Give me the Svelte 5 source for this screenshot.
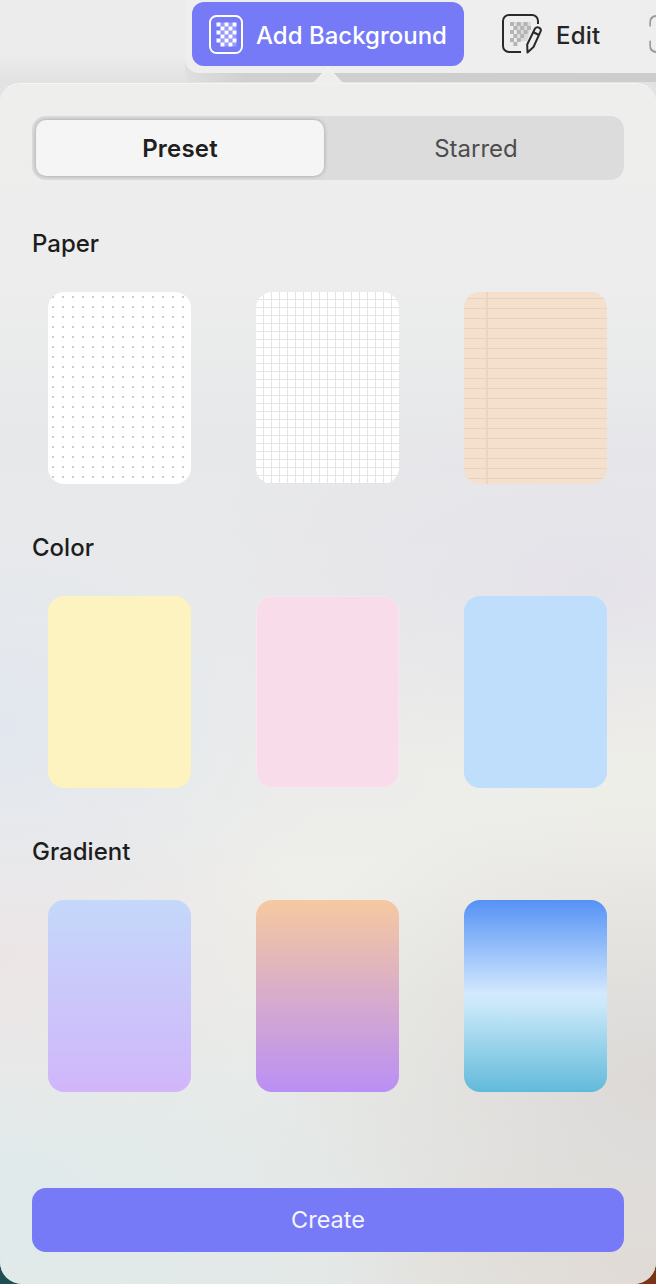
<script>
  const checker = [];
  for (let r = 0; r < 6; r++) for (let c = 0; c < 5; c++) if ((r + c) % 2 === 0) checker.push({ x: c * 4, y: r * 4 });
  const editCells = [];
  const widths = [6, 6, 5, 4, 3, 2];
  for (let r = 0; r < 6; r++) for (let c = 0; c < widths[r]; c++) if ((r + c) % 2 === 0) editCells.push({ x: c * 3.4, y: r * 4 });
  const sections = [
    { title: 'Paper', tiles: ['dots', 'grid', 'lined'] },
    { title: 'Color', tiles: ['yellow', 'pink', 'blue'] },
    { title: 'Gradient', tiles: ['g1', 'g2', 'g3'] }
  ];
</script>

<div class="page">
  <header class="top">
    <div class="bar-shade">
      <div class="bar">
        <button class="add">
          <svg width="34" height="39" viewBox="0 0 34 39">
            <rect x="1" y="1" width="32" height="37" rx="6.5" fill="none" stroke="#fff" stroke-width="2" />
            {#each checker as c}
              <rect x={7.5 + c.x} y={7.5 + c.y} width="4" height="4" fill="#fff" />
            {/each}
            {#each checker as c}
              {#if c.x < 16}<rect x={11.5 + c.x} y={7.5 + c.y} width="4" height="4" fill="#fff" opacity="0.25" />{/if}
            {/each}
          </svg>
          <span>Add Background</span>
        </button>
        <div class="edit">
          <svg width="42" height="40" viewBox="0 0 42 40">
            <path d="M19 38H7a6 6 0 0 1-6-6V7a6 6 0 0 1 6-6h23a6 6 0 0 1 6 6v3" fill="none" stroke="#2a2a2a" stroke-width="2" />
            <g transform="translate(8 8)">
              {#each editCells as c}
                <rect x={c.x} y={c.y} width="4" height="4" fill="#b4b4b4" />
              {/each}
              <path d="M4 0h17v5l-4 14h-7z" fill="#b4b4b4" opacity="0.35" />
            </g>
            <path d="M33 14.500c2-2.600 6.500-.7 5.800 2.400L31.500 33 25.500 38.500l-.3-8z" fill="#eee" stroke="#2a2a2a" stroke-width="2" stroke-linejoin="round" />
            <path d="M31 18l6 3" stroke="#2a2a2a" stroke-width="2" fill="none" />
          </svg>
          <span>Edit</span>
        </div>
        <span class="clipped"></span>
      </div>
    </div>
    <svg class="arrow" width="36" height="17" viewBox="0 0 36 17">
      <path d="M0 16.500c3 0 4.500-1 6.500-3.500L16 2.500c1.200-1.400 2.800-1.400 4 0L29.500 13c2 2.500 3.500 3.500 6.500 3.500z" fill="#eeeeed" />
      <path d="M0 16.500c3 0 4.500-1 6.500-3.500L16 2.500c1.200-1.400 2.800-1.400 4 0L29.500 13c2 2.500 3.500 3.500 6.500 3.500" fill="none" stroke="#f8f8f8" stroke-width="1" />
    </svg>
  </header>

  <main class="panel">
    <div class="segment">
      <div class="seg on">Preset</div>
      <div class="seg">Starred</div>
    </div>

    {#each sections as s}
      <section>
        <h2>{s.title}</h2>
        <div class="tiles">
          {#each s.tiles as t}
            <div class="tile {t}"></div>
          {/each}
        </div>
      </section>
    {/each}

    <button class="create">Create</button>
  </main>
</div>

<style>
  :global(body) {
    margin: 0;
    background: #ebebeb;
  }
  .page {
    width: 656px;
    height: 1284px;
    overflow: hidden;
    display: flex;
    flex-direction: column;
    font-family: Inter, "Liberation Sans", sans-serif;
    background:
      linear-gradient(to right, #1f4f55 0 40px, transparent 40px) 0 100% / 100% 30px no-repeat,
      linear-gradient(to left, #7a3516 0 40px, transparent 40px) 0 100% / 100% 30px no-repeat,
      linear-gradient(to bottom, #ececec 0, #ececec 56px, #e2e2e2 82px, #e6e6e6 110px);
  }
  .top {
    position: relative;
    height: 83px;
    flex: none;
  }
  .bar-shade {
    margin-left: 185px;
    height: 82px;
    background: linear-gradient(to right, #e0e0e0, #d0d0d0 60px, #cdcdcd);
    border-bottom-left-radius: 8px;
  }
  .bar {
    height: 73px;
    box-sizing: border-box;
    padding: 2px 0 0 7px;
    background: #eeeeee;
    border-bottom-left-radius: 14px;
    display: flex;
    align-items: flex-start;
    overflow: hidden;
  }
  .add {
    width: 272px;
    height: 64px;
    flex: none;
    border: 0;
    border-radius: 12px;
    background: #767af7;
    color: #fff;
    font: 500 24px Inter, "Liberation Sans", sans-serif;
    display: flex;
    align-items: center;
    gap: 13px;
    padding: 0 0 0 17px;
  }
  .add svg {
    flex: none;
  }
  .add span,
  .edit span {
    padding-top: 2px;
  }
  .edit {
    margin-left: 38px;
    height: 64px;
    display: flex;
    align-items: center;
    gap: 12px;
    font-size: 24px;
    font-weight: 500;
    letter-spacing: 0.2px;
    color: #262626;
    flex: none;
  }
  .clipped {
    flex: none;
    margin: 13px 0 0 49px;
    width: 24px;
    height: 38px;
    box-sizing: border-box;
    border: 2px solid #9a9a9a;
    border-right: 0;
    border-radius: 7px 0 0 7px;
    clip-path: polygon(0 0, 100% 0, 100% 30%, 0 30%, 0 68%, 100% 68%, 100% 100%, 0 100%);
  }
  .arrow {
    position: absolute;
    left: 310px;
    top: 67px;
  }
  .panel {
    flex: 1;
    box-sizing: border-box;
    padding: 32px 32px 32px;
    border-radius: 20px 20px 22px 22px;
    border-top: 1px solid #f7f7f7;
    display: flex;
    flex-direction: column;
    background:
      radial-gradient(ellipse 420px 200px at 90% 500px, #e5e3ea 0, rgba(229, 227, 234, 0) 100%),
      radial-gradient(ellipse 340px 240px at 0% 640px, #e2e7ef 0, rgba(226, 231, 239, 0) 100%),
      radial-gradient(ellipse 300px 180px at 100% 630px, #f0efe8 0, rgba(240, 239, 232, 0) 100%),
      radial-gradient(ellipse 320px 190px at 0% 870px, #ece5e6 0, rgba(236, 229, 230, 0) 100%),
      radial-gradient(ellipse 430px 260px at 0% 1120px, #e0eaeb 0, rgba(224, 234, 235, 0) 100%),
      radial-gradient(ellipse 420px 300px at 100% 1000px, #dcd9d7 0, rgba(220, 217, 215, 0) 100%),
      radial-gradient(ellipse 340px 150px at 100% 1190px, #e3dbd5 0, rgba(227, 219, 213, 0) 100%),
      linear-gradient(to bottom, #eeeeed 0, #ecedec 200px, #e7e8ea 360px, #ecedea 700px, #eeeeea 800px, #e4e8e6 1201px);
  }
  .segment {
    height: 64px;
    flex: none;
    display: grid;
    grid-template-columns: 288px 1fr;
    padding: 4px;
    box-sizing: border-box;
    background: #dcdcdc;
    border-radius: 14px;
  }
  .seg {
    display: flex;
    align-items: center;
    justify-content: center;
    font-size: 24px;
    color: #4d4d4d;
    padding-left: 8px;
  }
  .seg.on {
    padding-left: 0;
    background: #f5f5f5;
    border-radius: 10px;
    color: #1f1f1f;
    font-weight: 600;
    letter-spacing: 0.2px;
    box-shadow: 0 0 4px rgba(0, 0, 0, 0.28);
  }
  section {
    flex: none;
    height: 304px;
    padding-top: 52px;
    box-sizing: border-box;
  }
  h2 {
    margin: 0;
    height: 24px;
    line-height: 24px;
    font-size: 24px;
    font-weight: 500;
    color: #1d1d1d;
  }
  .tiles {
    margin-top: 36px;
    padding-left: 16px;
    display: flex;
    gap: 65px;
  }
  .tile {
    width: 143px;
    height: 192px;
    flex: none;
    border-radius: 16px;
    box-sizing: border-box;
  }
  .dots {
    background:
      repeating-linear-gradient(to right, #fff 0 8px, transparent 8px 10px) -4px 0,
      repeating-linear-gradient(to bottom, #fff 0 8px, #cccccc 8px 10px) 0 -4px,
      #fff;
  }
  .grid {
    background:
      repeating-linear-gradient(to right, transparent 0 7px, #e4e4e4 7px 8px),
      repeating-linear-gradient(to bottom, transparent 0 7px, #e4e4e4 7px 8px),
      #fff;
  }
  .lined {
    background:
      linear-gradient(#eed2c4, #eed2c4) 22px 0 / 2px 100% no-repeat,
      repeating-linear-gradient(to bottom, transparent 0 6px, #e5d3c2 6px 7px, transparent 7px 10px),
      #f4e0cd;
  }
  .yellow { background: #fdf3c1; }
  .pink { background: #f9dcea; border: 1px solid #f8e6ef; }
  .blue { background: #bedefb; }
  .g1 { background: linear-gradient(to bottom, #c4d8fa, #d1b6fa); }
  .g2 { background: linear-gradient(to bottom, #f6c9a0, #ba8ff5); }
  .g3 { background: linear-gradient(to bottom, #5592f5 0, #d3e9fe 49%, #c9e8f9 55%, #61bada 100%); }
  .create {
    margin-top: auto;
    height: 64px;
    flex: none;
    border: 0;
    border-radius: 14px;
    padding: 0 0 2px;
    background: #767af7;
    color: #f4f4ff;
    font: 400 23.500px Inter, "Liberation Sans", sans-serif;
  }
</style>
